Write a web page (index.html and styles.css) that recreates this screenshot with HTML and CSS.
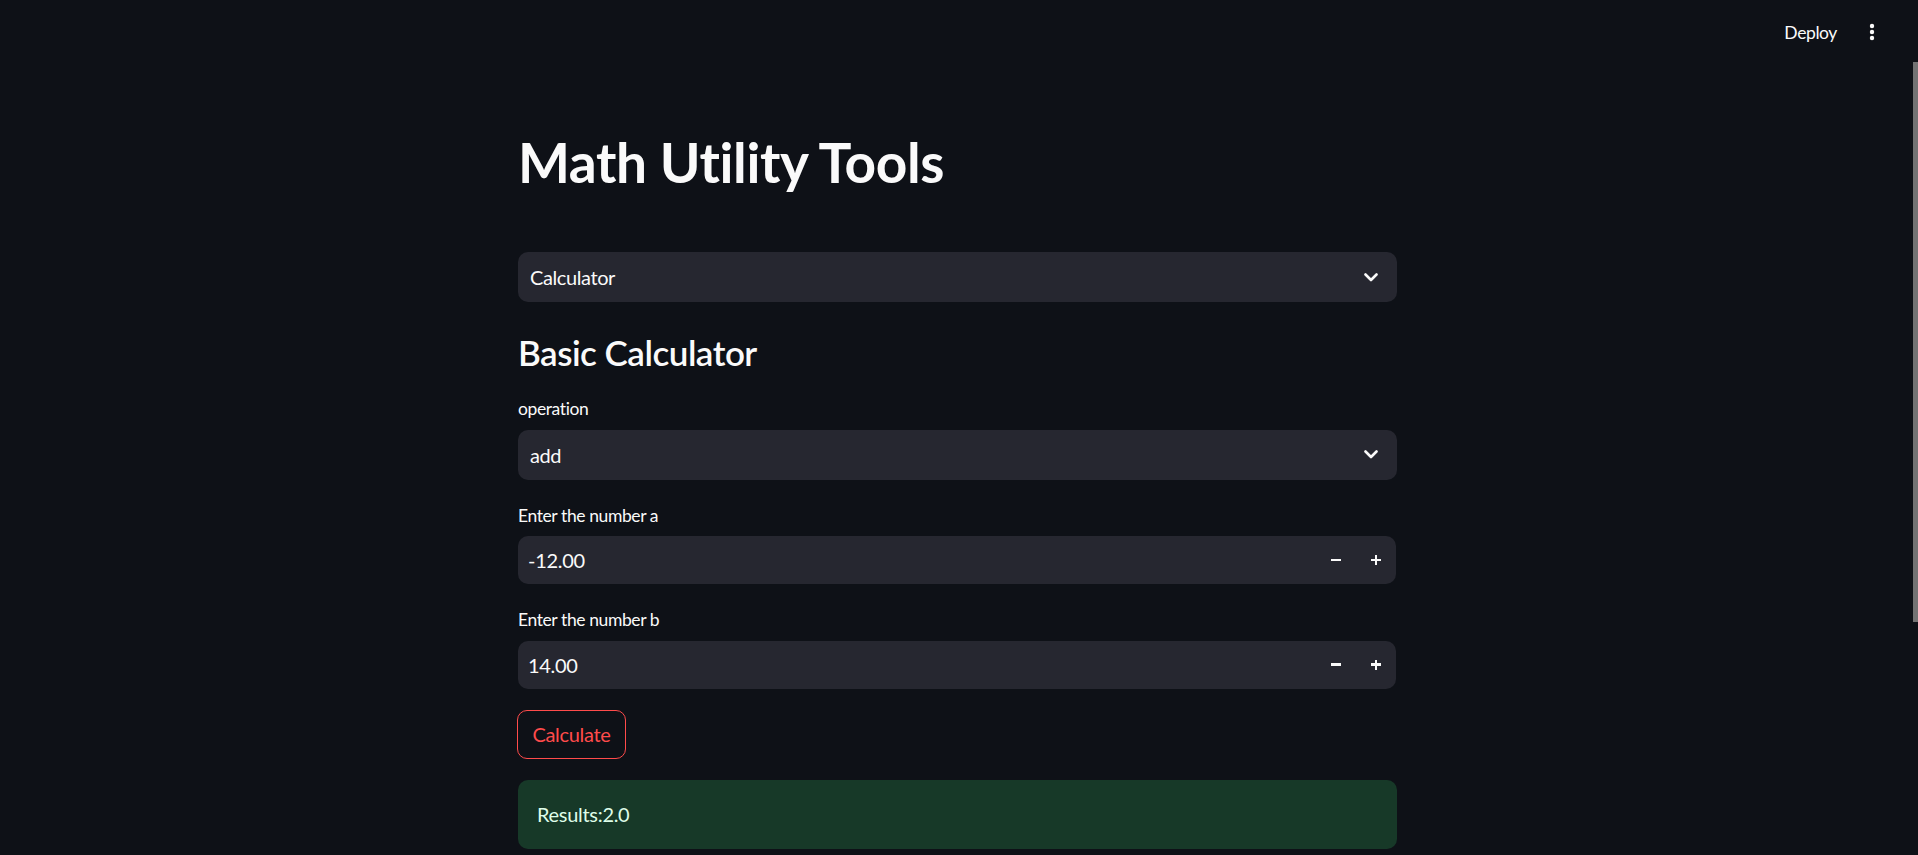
FILE: index.html
```html
<!DOCTYPE html>
<html lang="en">
<head>
<meta charset="utf-8">
<title>Math Utility Tools</title>
<link rel="stylesheet" href="styles.css">
</head>
<body>
<div class="app">
  <header class="topbar">
    <span class="deploy">Deploy</span>
    <svg class="menu-dots" width="6" height="18" viewBox="0 0 6 18" aria-hidden="true">
      <circle cx="3" cy="3" r="2.2" fill="#fafafa"/>
      <circle cx="3" cy="9" r="2.2" fill="#fafafa"/>
      <circle cx="3" cy="15" r="2.2" fill="#fafafa"/>
    </svg>
  </header>
  <main class="main">
    <div class="block">
      <h1 class="title">Math Utility Tools</h1>

      <div class="select">
        <span class="select-value">Calculator</span>
        <svg class="chevron" width="14" height="9" viewBox="0 0 14 9" aria-hidden="true">
          <polyline points="1.5,1.5 7,7 12.5,1.5" fill="none" stroke="#fafafa" stroke-width="2.6" stroke-linecap="round" stroke-linejoin="round"/>
        </svg>
      </div>

      <h3 class="subtitle">Basic Calculator</h3>

      <div class="widget">
        <label class="label">operation</label>
        <div class="select">
          <span class="select-value">add</span>
          <svg class="chevron" width="14" height="9" viewBox="0 0 14 9" aria-hidden="true">
            <polyline points="1.5,1.5 7,7 12.5,1.5" fill="none" stroke="#fafafa" stroke-width="2.6" stroke-linecap="round" stroke-linejoin="round"/>
          </svg>
        </div>
      </div>

      <div class="widget">
        <label class="label">Enter the number a</label>
        <div class="number">
          <span class="number-value">-12.00</span>
          <span class="step"><span class="minus"></span></span>
          <span class="step"><span class="plus"></span></span>
        </div>
      </div>

      <div class="widget">
        <label class="label">Enter the number b</label>
        <div class="number">
          <span class="number-value">14.00</span>
          <span class="step"><span class="minus"></span></span>
          <span class="step"><span class="plus"></span></span>
        </div>
      </div>

      <div class="btn-row">
        <button class="btn">Calculate</button>
      </div>

      <div class="success">Results:2.0</div>
    </div>
  </main>
  <div class="scroll-thumb"></div>
</div>
</body>
</html>
```

FILE: styles.css
```css
* { box-sizing: border-box; }

html, body {
  margin: 0;
  padding: 0;
  height: 855px;
  overflow: hidden;
  background: #0e1117;
}

body {
  font-family: "Lato", "Noto Sans", "Liberation Sans", sans-serif;
  color: #fafafa;
}

.app {
  position: relative;
  height: 855px;
}

.topbar {
  height: 64px;
  display: flex;
  justify-content: flex-end;
  align-items: center;
  padding-right: 43px;
}

.deploy {
  font-size: 17.5px;
  line-height: 21px;
  letter-spacing: -0.4px;
  color: #fafafa;
}

.menu-dots {
  margin-left: 32px;
  display: block;
}

.main {
  display: flex;
  justify-content: center;
  padding-right: 3px;
}

.block {
  width: 879px;
  display: flex;
  flex-direction: column;
  gap: 21px;
  padding-top: 65px;
}

.title {
  margin: 0;
  font-size: 55px;
  line-height: 66px;
  font-weight: 700;
  letter-spacing: -0.4px;
  padding-bottom: 36px;
  color: #fafafa;
}

.subtitle {
  margin: 0;
  font-size: 35px;
  line-height: 42px;
  font-weight: 600;
  letter-spacing: -0.5px;
  padding-top: 8px;
  color: #fafafa;
}

.widget {
  display: flex;
  flex-direction: column;
}

.label {
  font-size: 17.5px;
  line-height: 21px;
  letter-spacing: -0.4px;
  padding-top: 4px;
  margin-bottom: 10.5px;
  color: #fafafa;
}

.select {
  height: 50px;
  background: #262730;
  border-radius: 10px;
  display: flex;
  align-items: center;
  padding: 0 19px 0 12px;
}

.select-value {
  flex: 1;
  font-size: 20px;
  line-height: 24px;
  letter-spacing: -0.4px;
}

.chevron { display: block; }

.number {
  height: 48px;
  background: #262730;
  border-radius: 10px;
  display: flex;
  align-items: center;
  padding-left: 10px;
  margin-right: 1px;
}

.number-value {
  flex: 1;
  font-size: 20px;
  line-height: 24px;
  letter-spacing: -0.3px;
}

.step {
  width: 40px;
  height: 48px;
  display: flex;
  align-items: center;
  justify-content: center;
  position: relative;
}

.minus {
  width: 10px;
  height: 2.6px;
  background: #fafafa;
}

.plus {
  width: 10px;
  height: 10px;
  position: relative;
  display: block;
}

.plus::before,
.plus::after {
  content: "";
  position: absolute;
  background: #fafafa;
}

.plus::before {
  left: 0;
  top: 3.7px;
  width: 10px;
  height: 2.6px;
}

.plus::after {
  left: 3.7px;
  top: 0;
  width: 2.6px;
  height: 10px;
}

.btn-row { display: flex; }

.btn {
  height: 49px;
  width: 109px;
  padding: 0;
  margin-left: -1px;
  background: #0e1117;
  border: 1px solid #ff4b4b;
  border-radius: 10px;
  color: #ff4b4b;
  font-family: inherit;
  font-size: 20px;
  line-height: 24px;
  letter-spacing: -0.3px;
}

.success {
  height: 69px;
  background: #173928;
  border-radius: 10px;
  padding: 18.5px 19px;
  font-size: 20px;
  line-height: 32px;
  letter-spacing: -0.3px;
  color: #dffde9;
}

.scroll-thumb {
  position: absolute;
  right: 0;
  top: 62px;
  width: 5px;
  height: 560px;
  background: #737373;
}
```
